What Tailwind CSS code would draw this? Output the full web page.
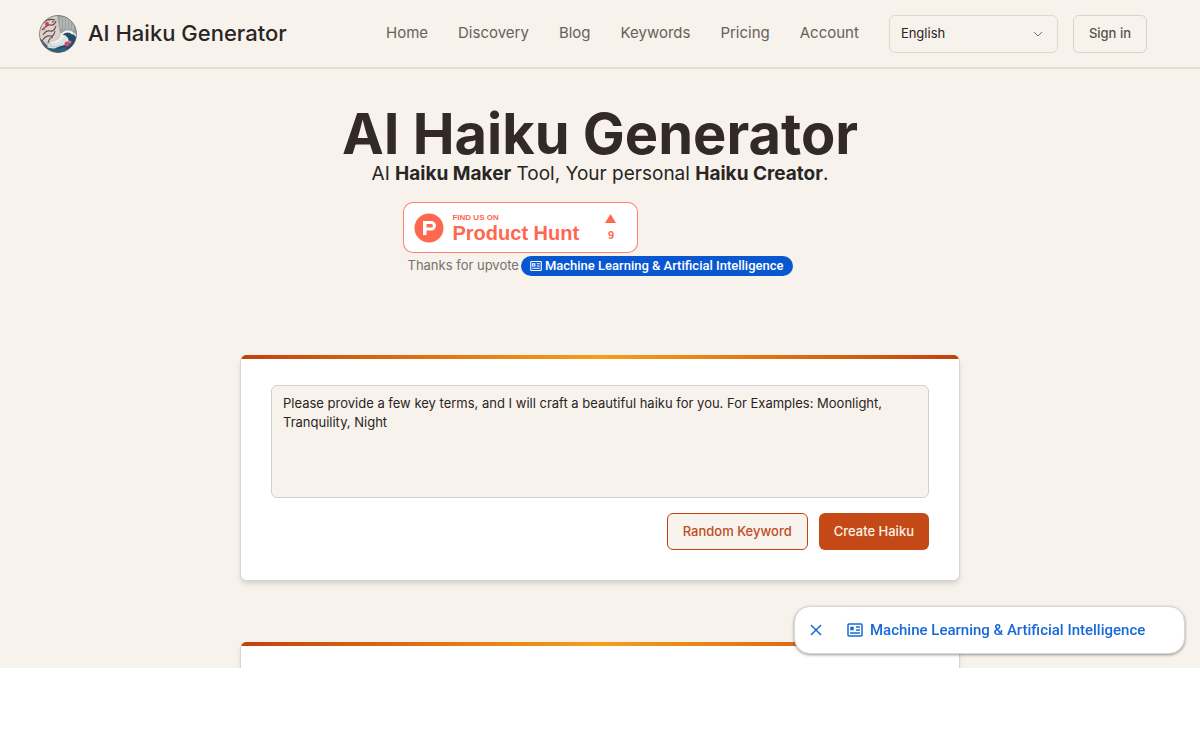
<!DOCTYPE html>
<html lang="en">
<head>
    <meta charset="UTF-8">
    <meta name="viewport" content="width=device-width, initial-scale=1.0">
    <title>AI Haiku Generator</title>
    <script src="https://cdn.jsdelivr.net/npm/@tailwindcss/browser@4"></script>
</head>
<body class="bg-white font-['Inter',sans-serif] text-[#292524]">
    <div class="bg-[#f7f2eb] overflow-hidden">
        <header class="flex items-center h-[69px] pl-[39px] pr-[53px] border-b-2 border-[#e2dcd4]">
            <a href="#" class="flex items-center gap-[11px] mr-auto">
                <svg class="size-[38px]" viewBox="0 0 38 38" aria-hidden="true">
                    <defs><clipPath id="round"><circle cx="19" cy="19" r="18.5"/></clipPath></defs>
                    <g clip-path="url(#round)">
                        <rect width="38" height="38" fill="#d5ccc6"/>
                        <path d="M18 0h20v18H21z" fill="#9da1a1"/>
                        <path d="M22 2v11M25 2v12M28 3v11M31 5v9M34 7v8" stroke="#c9caca" stroke-width="1"/>
                        <path d="M0 12Q5 5 15 8Q22 12 19 20Q12 30 0 25z" fill="#e2d2cd"/>
                        <path d="M4 8q5-5 12-3M3 15q6-6 9-5t5-4M4 20q3-5 7-4t6-5M3 26q4-6 8-5t5-5M9 28q1-5 5-6" fill="none" stroke="#5b4e51" stroke-width="1.100"/>
                        <path d="M0 22l9 9-4 5H0z" fill="#59666b"/>
                        <path d="M9 30Q20 29 21 21Q25 13 33 16L38 22V38H8z" fill="#dce3e4"/>
                        <path d="M22 31Q32 29 29 23Q26 19 23 20Q29 14 34 19L38 23V38H12Q14 33 22 31" fill="#234a66"/>
                        <path d="M22 20q6-6 12-1M12 28q8-1 12-7" fill="none" stroke="#f4f2ef" stroke-width="1.700"/>
                        <path d="M5 31q10 5 22 1l2 6H5z" fill="#2f6079"/>
                        <path d="M10 31q7 2 13-1" fill="none" stroke="#b6cbd1" stroke-width="1"/>
                        <circle cx="8" cy="9" r="2" fill="#d33c4c"/>
                        <circle cx="5" cy="14" r="1" fill="#c45059"/>
                        <circle cx="14" cy="7" r="1" fill="#c45059"/>
                        <circle cx="28" cy="29" r="2.500" fill="#c94b68"/>
                        <circle cx="31" cy="27" r="1.500" fill="#d47a88"/>
                    </g>
                    <circle cx="19" cy="19" r="18.5" fill="none" stroke="#5d6268" stroke-width=".7"/>
                </svg>
                <span class="text-[22px] font-medium">AI Haiku Generator</span>
            </a>
            <nav class="flex items-center gap-[30px] text-[15px] text-[#67615c]">
                <a href="#">Home</a>
                <a href="#">Discovery</a>
                <a href="#">Blog</a>
                <a href="#">Keywords</a>
                <a href="#">Pricing</a>
                <a href="#">Account</a>
            </nav>
            <div class="relative ml-[30px]">
                <select aria-label="Language" class="appearance-none block w-[169px] h-[38px] px-[11px] border border-[#ddd8d0] rounded-md text-[13px] bg-transparent">
                    <option>English</option>
                </select>
                <svg class="absolute right-[15px] top-[15px] w-[10px] h-2 pointer-events-none" viewBox="0 0 10 8" fill="none" stroke="#78716c" aria-hidden="true"><path d="M1 2l4 4 4-4"/></svg>
            </div>
            <button class="ml-[15px] h-[38px] px-[15px] border border-[#d8d3cb] rounded-md text-[13px] font-medium text-[#57534e]">Sign in</button>
        </header>

        <section class="flex flex-col items-center pt-[37px]">
            <h1 class="text-[56px] leading-14 font-bold text-[#332925]">AI Haiku Generator</h1>
            <p class="text-[19px] leading-6">AI <strong>Haiku Maker</strong> Tool, Your personal <strong>Haiku Creator</strong>.</p>
            <div class="mt-4">
                <a href="#" class="flex items-center w-[235px] h-[51px] -ml-1 pl-[10px] pr-[21px] bg-white border border-[#ff6154]/80 rounded-[10px] font-['Liberation_Sans',sans-serif] font-bold text-[#ff6850]">
                    <svg class="size-[30px] mr-2" viewBox="0 0 30 30" aria-hidden="true">
                        <circle cx="15" cy="15" r="14.5" fill="#ff6850"/>
                        <path fill="#fff" fill-rule="evenodd" d="M9 8h8.2a4.8 4.8 0 0 1 0 9.6H12.500V22H9zM12.500 11v3.600h4.700a1.800 1.800 0 0 0 0-3.600z"/>
                    </svg>
                    <span class="flex flex-col pt-px">
                        <span class="text-[8px] leading-[10px]">FIND US ON</span>
                        <span class="text-xl leading-5">Product Hunt</span>
                    </span>
                    <span class="ml-auto flex flex-col items-center gap-[6px] text-[11px] leading-3">
                        <svg class="w-[11px] h-[9px]" viewBox="0 0 11 9" fill="#ff6850" aria-hidden="true"><path d="M5.500 0L11 9H0z"/></svg>
                        9
                    </span>
                </a>
                <div class="flex items-center mt-[3px] text-[13px]">
                    <span class="text-[#78716c]">Thanks for upvote</span>
                    <a href="#" class="flex items-center gap-[3px] ml-[2px] h-5 px-[9px] rounded-full bg-[#0957d0] text-white font-['Roboto',sans-serif] font-medium">
                        <svg class="size-3" viewBox="0 0 16 14" fill="none" stroke="currentColor" stroke-width="1.500" aria-hidden="true"><rect x="1" y="1" width="14" height="12" rx="1"/><path d="M3.500 4h3v3h-3zM9 4h4M9 7h4M3 10h10"/></svg>
                        Machine Learning &amp; Artificial Intelligence
                    </a>
                </div>
            </div>
        </section>

        <main class="mx-auto mt-[79px] w-full max-w-[720px]">
            <section class="rounded-md border border-[#d9d5cf] border-t-0 bg-white shadow-md overflow-hidden">
                <div class="h-1 bg-linear-to-r from-[#c2410c] via-[#f59e1b] to-[#c2410c]"></div>
                <form class="px-[30px] pt-[26px] pb-[30px]">
                    <textarea aria-label="Key terms" class="block w-full h-[113px] px-[11px] py-2 border border-[#d3cfca] rounded-md bg-[#f7f2eb] text-[13px] leading-[19px] resize-none">Please provide a few key terms, and I will craft a beautiful haiku for you. For Examples: Moonlight, Tranquility, Night</textarea>
                    <div class="flex justify-end gap-[11px] mt-[15px] text-[13px] font-medium">
                        <button type="button" class="h-[37px] px-[15px] border border-[#c2410c] rounded-md bg-[#f9f3ed] text-[#c14c22]">Random Keyword</button>
                        <button type="button" class="h-[37px] px-[15px] rounded-md bg-[#c54916] text-[#fdf3e9]">Create Haiku</button>
                    </div>
                </form>
            </section>
            <section class="mt-[61px] rounded-t-md border-x border-[#d9d5cf] bg-white shadow-md overflow-hidden">
                <div class="h-1 bg-linear-to-r from-[#c2410c] via-[#f59e1b] to-[#c2410c]"></div>
                <div class="h-[22px]"></div>
            </section>
        </main>
    </div>

    <aside class="fixed right-[15px] bottom-24 flex items-center h-12 w-[391px] pl-[15px] bg-white border border-[#d9d7d5] rounded-2xl shadow-[0_1px_3px_#00000066] font-['Roboto',sans-serif] text-[15px] font-medium text-[#1769d8]">
        <button aria-label="Close" class="mr-[25px]">
            <svg class="size-3" viewBox="0 0 12 12" fill="none" stroke="currentColor" stroke-width="1.500"><path d="M1 1l10 10M11 1L1 11"/></svg>
        </button>
        <a href="#" class="flex items-center gap-[7px]">
            <svg class="w-4 h-[14px]" viewBox="0 0 16 14" fill="none" stroke="currentColor" stroke-width="1.500" aria-hidden="true"><rect x="1" y="1" width="14" height="12" rx="1"/><path fill="currentColor" d="M4 4.500h2v2H4z"/><path d="M9 4h4M9 7h4M3 10h10"/></svg>
            Machine Learning &amp; Artificial Intelligence
        </a>
    </aside>
</body>
</html>
